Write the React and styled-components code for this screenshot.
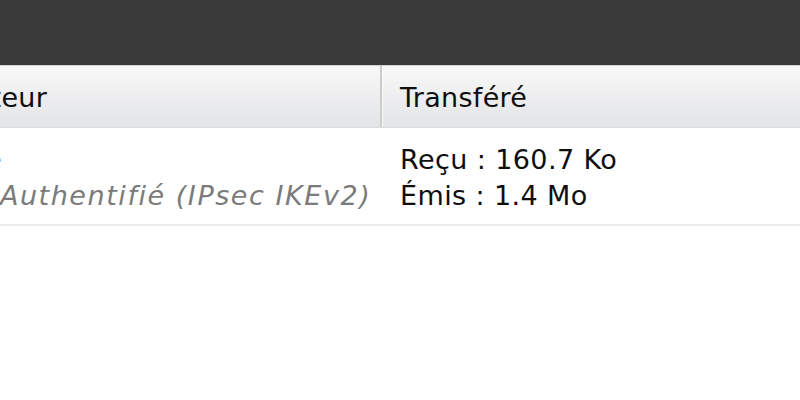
import React from 'react'
import styled, { createGlobalStyle } from 'styled-components'

const Global = createGlobalStyle`
  html, body {
    margin: 0;
    padding: 0;
    background: #ffffff;
  }
  body {
    font-family: "DejaVu Sans", Verdana, sans-serif;
    color: #0e0e0e;
  }
`

// dark title bar on top
const TopBar = styled.div`
  height: 65px;
  background-color: #3a3a3a;
`

// clip the list, it's scrolled to the right a bit
const Viewport = styled.div`
  width: 800px;
  overflow: hidden;
`

const Table = styled.div`
  width: 910px;
  margin-left: -110px;
`

const HeaderRow = styled.div`
  display: grid;
  grid-template-columns: 492px 1fr;
  height: 61px;
  border-top: 1px solid #cfd0d1;
  border-bottom: 1px solid #dcdcdc;
  background: linear-gradient(to bottom, #f8f8f8 0%, #e3e4e6 100%);
`

const HeaderCell = styled.div`
  display: flex;
  align-items: center;
  padding-left: ${p => (p.$first ? '15px' : '18px')};
  padding-top: 1px;
  font-size: 27px;
  letter-spacing: 0.3px;
  border-right: ${p => (p.$first ? '2px solid #cbcbcb' : 'none')};
  box-shadow: ${p => (p.$first ? '1px 0 0 #fafafa' : 'none')};
  white-space: nowrap;
`

const Row = styled.div`
  display: grid;
  grid-template-columns: 492px 1fr;
  height: 96px;
  border-bottom: 2px solid #ebebeb;
`

const Cell = styled.div`
  display: flex;
  flex-direction: column;
  justify-content: center;
  padding-left: 18px;
  padding-top: 3px;
  font-size: 27px;
  line-height: 36px;
  letter-spacing: 0.4px;
  white-space: nowrap;
`

const Status = styled.span`
  font-style: italic;
  color: #7b7b7b;
  letter-spacing: 1.55px;
`

const App = () => {
  return (
    <>
      <Global />
      <TopBar />
      <Viewport>
        <Table>
          <HeaderRow>
            <HeaderCell $first>Utilisateur</HeaderCell>
            <HeaderCell>Transféré</HeaderCell>
          </HeaderRow>
          <Row>
            <Cell>
              <span>jeanne</span>
              <Status>État : Authentifié (IPsec IKEv2)</Status>
            </Cell>
            <Cell>
              <span>Reçu : 160.7 Ko</span>
              <span>Émis : 1.4 Mo</span>
            </Cell>
          </Row>
        </Table>
      </Viewport>
    </>
  )
}

export default App
